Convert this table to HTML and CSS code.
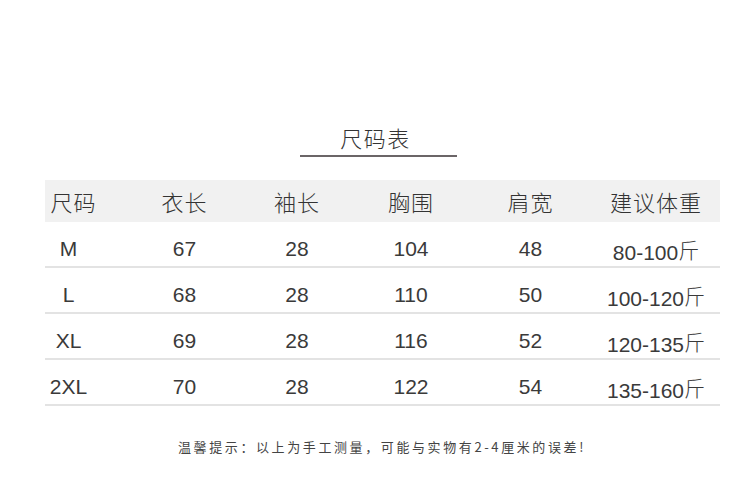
FILE: index.html
```html
<!DOCTYPE html>
<html lang="zh-CN">
<head>
<meta charset="utf-8">
<title>尺码表</title>
<link rel="stylesheet" href="styles.css">
</head>
<body>
<div class="page">
  <div class="title-wrap"><h1 class="title">尺码表</h1></div>
  <div class="table">
    <div class="row head">
      <div class="cell first">尺码</div>
      <div class="cell">衣长</div>
      <div class="cell">袖长</div>
      <div class="cell">胸围</div>
      <div class="cell">肩宽</div>
      <div class="cell">建议体重</div>
    </div>
    <div class="row">
      <div class="cell first">M</div>
      <div class="cell">67</div>
      <div class="cell">28</div>
      <div class="cell">104</div>
      <div class="cell">48</div>
      <div class="cell">80-100<span class="cjk">斤</span></div>
    </div>
    <div class="row">
      <div class="cell first">L</div>
      <div class="cell">68</div>
      <div class="cell">28</div>
      <div class="cell">110</div>
      <div class="cell">50</div>
      <div class="cell">100-120<span class="cjk">斤</span></div>
    </div>
    <div class="row">
      <div class="cell first">XL</div>
      <div class="cell">69</div>
      <div class="cell">28</div>
      <div class="cell">116</div>
      <div class="cell">52</div>
      <div class="cell">120-135<span class="cjk">斤</span></div>
    </div>
    <div class="row">
      <div class="cell first">2XL</div>
      <div class="cell">70</div>
      <div class="cell">28</div>
      <div class="cell">122</div>
      <div class="cell">54</div>
      <div class="cell">135-160<span class="cjk">斤</span></div>
    </div>
  </div>
  <p class="note">温馨提示：以上为手工测量，可能与实物有2-4厘米的误差!</p>
</div>
</body>
</html>
```
FILE: styles.css
```css
html, body {
  margin: 0;
  padding: 0;
  background: #ffffff;
}
body {
  font-family: "Liberation Sans", "Noto Sans CJK SC", sans-serif;
  color: #3a3a3a;
}
.page {
  width: 750px;
  height: 497px;
  padding-top: 120px;
  box-sizing: border-box;
}
.title-wrap {
  width: 157px;
  margin: 0 0 0 300px;
  border-bottom: 2px solid #6b6567;
}
.title {
  margin: 0;
  padding-right: 6px;
  font-family: "Noto Sans CJK SC", sans-serif;
  font-weight: 300;
  font-size: 22px;
  line-height: 35px;
  letter-spacing: 1.5px;
  text-align: center;
  color: #333333;
}
.table {
  margin: 23px 0 0 45px;
  width: 675px;
}
.row {
  display: grid;
  grid-template-columns: 83px 113px 112px 116px 123px 128px;
  height: 44px;
  border-bottom: 2px solid #e3e3e3;
}
.row.head {
  height: 42px;
  border-bottom: none;
  background: #f1f1f1;
  font-family: "Noto Sans CJK SC", sans-serif;
  font-weight: 300;
  letter-spacing: 1px;
  color: #333333;
}
.cell {
  text-align: center;
  font-size: 21px;
  line-height: 24px;
  padding-top: 15px;
}
.row.head .cell {
  font-size: 22px;
  line-height: 42px;
  padding-top: 0;
}
.cell.first {
  padding-right: 36px;
}
.row.head .cell.first {
  padding-right: 26px;
}
.cjk {
  font-family: "Noto Sans CJK SC", sans-serif;
  font-weight: 300;
  vertical-align: 2px;
}
.note {
  margin: 31px 0 0;
  padding-left: 14px;
  text-align: center;
  font-family: "Noto Sans CJK SC", sans-serif;
  font-size: 13px;
  line-height: 20px;
  letter-spacing: 2.6px;
  color: #444444;
}
```
